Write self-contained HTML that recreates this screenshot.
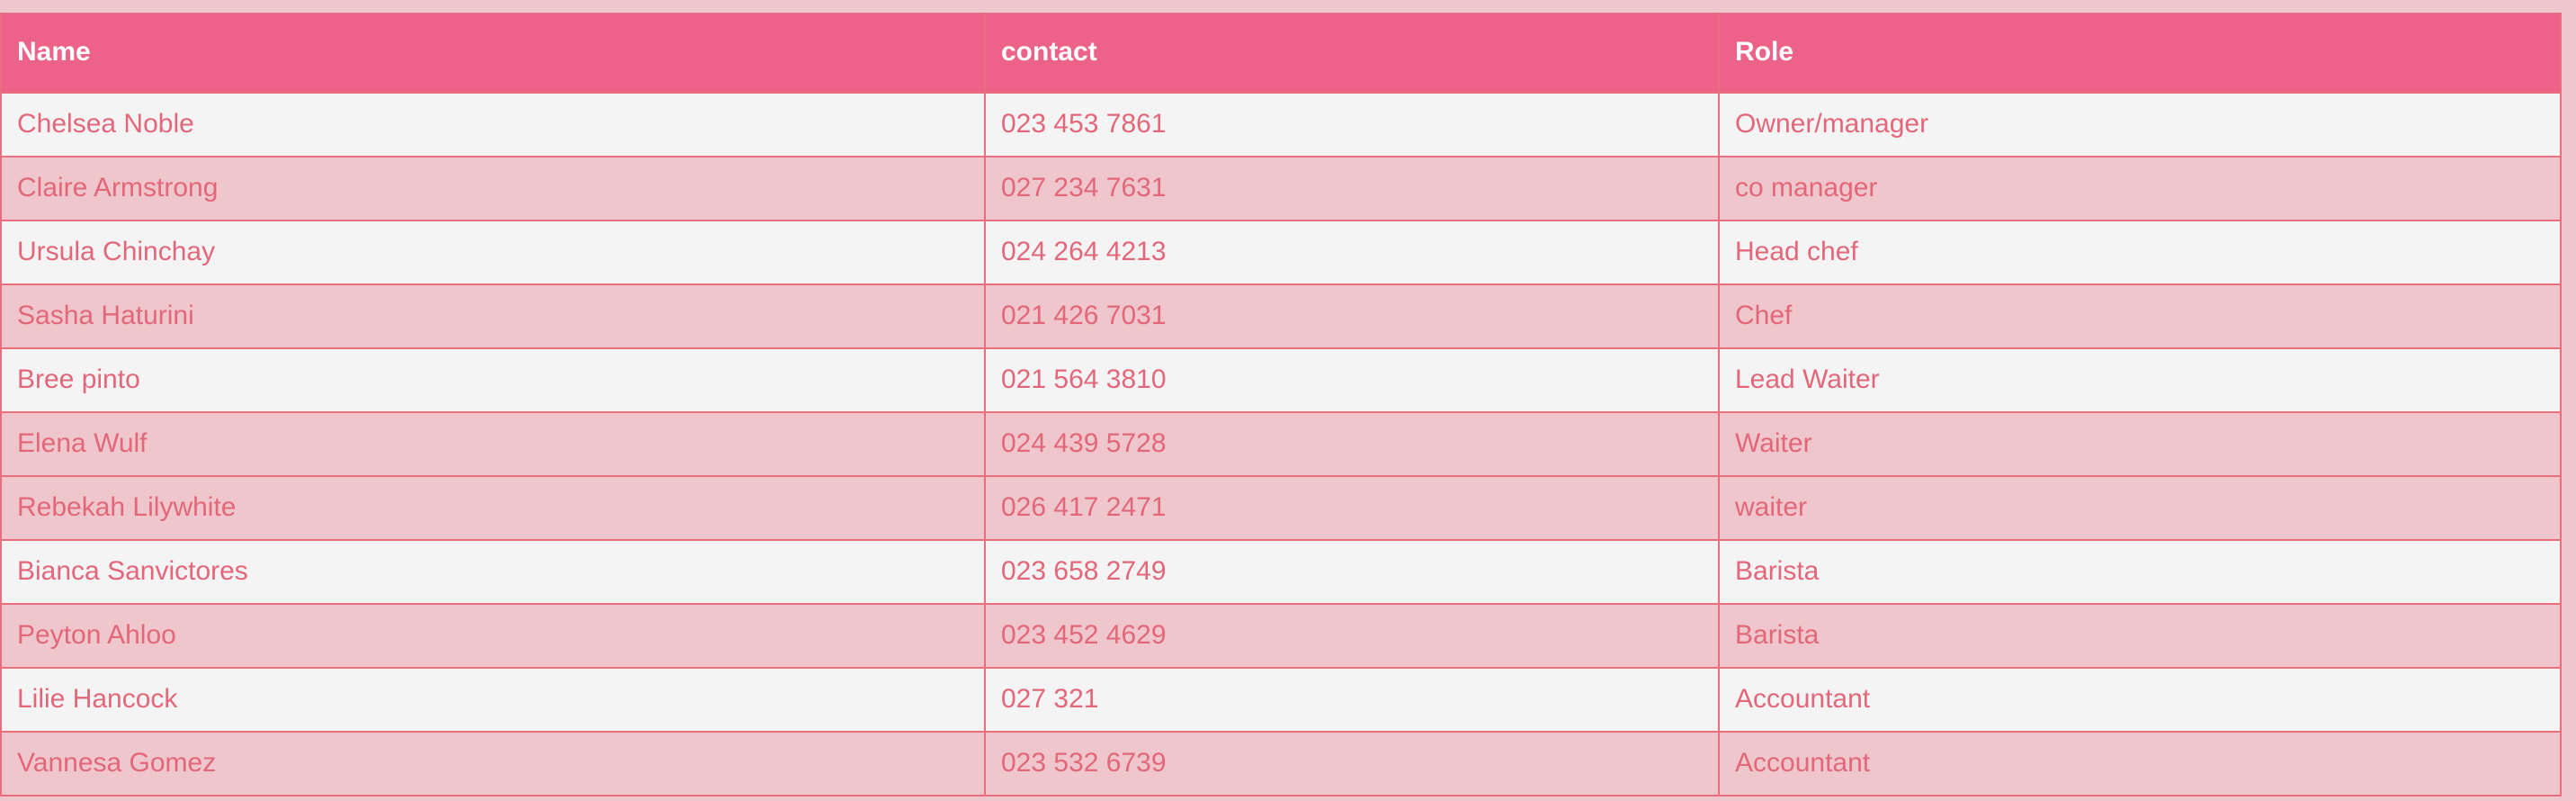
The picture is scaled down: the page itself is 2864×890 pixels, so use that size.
<!DOCTYPE html>
<html><head><meta charset="utf-8"><style>
body{margin:0;width:2864px;height:890px;background:#efc6cb;position:relative;overflow:hidden;font-family:"Liberation Sans",sans-serif}
.a{position:absolute}
.t{position:absolute;font-size:30px;line-height:30px;color:#e3677a;white-space:nowrap}
.h{color:#fff;font-weight:bold}
</style></head><body>
<div class="a" style="left:0;top:14px;width:2848px;height:88px;background:#ec6288"></div>
<div id="rows"></div>
<script>
const d=[["Chelsea Noble","023 453 7861","Owner/manager"],["Claire Armstrong","027 234 7631","co manager"],["Ursula Chinchay","024 264 4213","Head chef"],["Sasha Haturini","021 426 7031","Chef"],["Bree pinto","021 564 3810","Lead Waiter"],["Elena Wulf","024 439 5728","Waiter"],["Rebekah Lilywhite","026 417 2471","waiter"],["Bianca Sanvictores","023 658 2749","Barista"],["Peyton Ahloo","023 452 4629","Barista"],["Lilie Hancock","027 321","Accountant"],["Vannesa Gomez","023 532 6739","Accountant"]];
const pink=[0,1,0,1,0,1,1,0,1,0,1];
let h='';const xs=[19,1113,1929];
['Name','contact','Role'].forEach((s,j)=>h+=`<div class="t h" style="left:${xs[j]}px;top:43px">${s}</div>`);
d.forEach((r,i)=>{const y=102+71*i;
h+=`<div class="a" style="left:0;top:${y}px;width:2848px;height:71px;background:${pink[i]?'#efc6cb':'#f4f4f4'}"></div>`;
r.forEach((s,j)=>h+=`<div class="t" style="left:${xs[j]}px;top:${y+21}px">${s}</div>`);});
for(let i=0;i<=11;i++)h+=`<div class="a" style="left:0;top:${102+71*i}px;width:2848px;height:2px;background:#e8707e"></div>`;
h+=`<div class="a" style="left:0;top:14px;width:2px;height:871px;background:#e8707e"></div>`;
h+=`<div class="a" style="left:2846px;top:14px;width:2px;height:871px;background:#e8707e"></div>`;
h+=`<div class="a" style="left:0;top:14px;width:2848px;height:1px;background:#e47488"></div>`;
h+=`<div class="a" style="left:1094px;top:14px;width:2px;height:871px;background:#e8707e"></div>`;
h+=`<div class="a" style="left:1910px;top:14px;width:2px;height:871px;background:#e8707e"></div>`;
document.getElementById('rows').innerHTML=h;
</script>
</body></html>
